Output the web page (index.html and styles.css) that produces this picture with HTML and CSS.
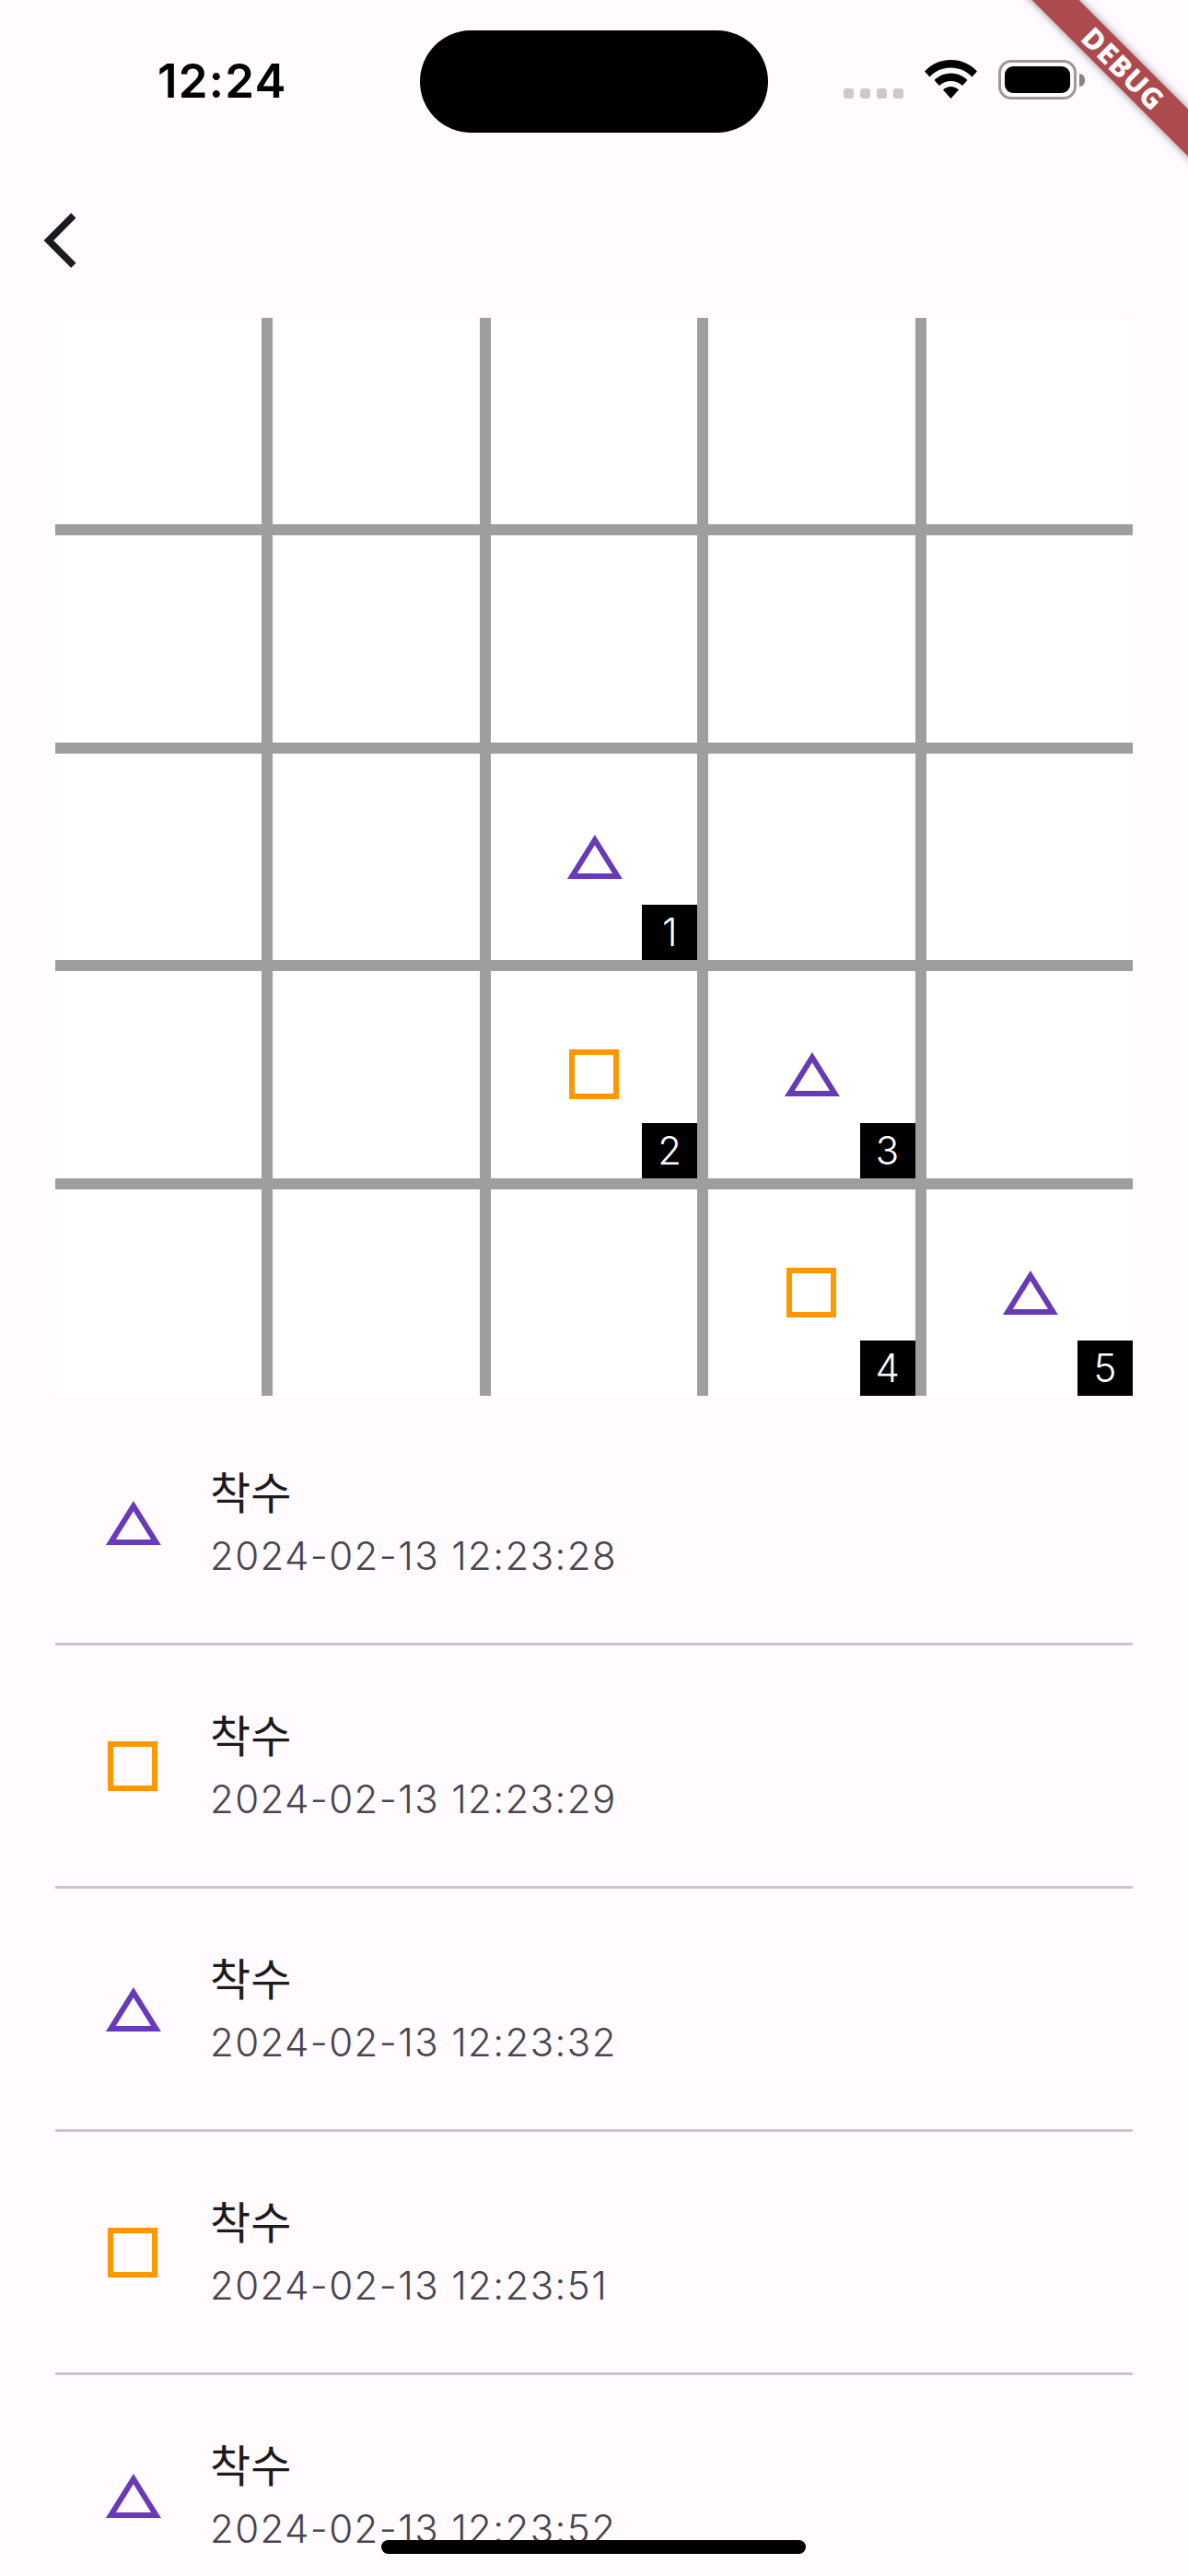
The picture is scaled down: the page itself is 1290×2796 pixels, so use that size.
FILE: index.html
```html
<!DOCTYPE html>
<html lang="ko">

<head>
    <meta name="viewport" content="width=device-width, initial-scale=1.0">
    <title>착수</title>
    <link rel="stylesheet" href="styles.css">
</head>

<body>
    <svg class="sprite" width="0" height="0">
        <symbol id="tri" viewBox="-0.3 0 24 24"><path d="M12 7.77 18.39 18H5.61L12 7.77M12 4 2 20h20L12 4z"/></symbol>
        <symbol id="sq" viewBox="0 0 24 24"><path d="M19 5v14H5V5h14m2-2H3v18h18V3z"/></symbol>
    </svg>

    <header class="status">
        <span class="time">12:24</span>
        <div class="island"></div>
        <div class="dots"><i></i><i></i><i></i><i></i></div>
        <svg class="wifi" viewBox="0 0 57 42">
            <path d="M28.5 0C39.5 0 49.5 4.300 57 12.500L51.500 18.500C45.500 12 37.500 8.500 28.500 8.500S11.500 12 5.500 18.500L0 12.500C7.500 4.300 17.500 0 28.500 0z"/>
            <path d="M28.500 14.500C35.500 14.500 41.500 17.200 46.500 22L41 28C37.500 24.800 33.300 23 28.500 23S19.500 24.800 16 28L10.500 22C15.500 17.200 21.500 14.500 28.500 14.500z"/>
            <path d="M28.500 29C31.800 29 34.700 30.200 37 32.500L28.500 42 20 32.500C22.300 30.200 25.200 29 28.500 29z"/>
        </svg>
        <div class="battery"><div class="level"></div></div>
        <div class="nub"></div>
    </header>

    <nav class="appbar">
        <svg class="back" viewBox="0 0 24 24"><path d="M17.510 3.870 15.730 2.100 5.840 12l9.900 9.900 1.770-1.770L9.380 12l8.130-8.130z"/></svg>
    </nav>

    <section class="board">
        <div class="cell"></div><div class="cell"></div><div class="cell"></div><div class="cell"></div><div class="cell"></div>
        <div class="cell"></div><div class="cell"></div><div class="cell"></div><div class="cell"></div><div class="cell"></div>
        <div class="cell"></div><div class="cell"></div>
        <div class="cell"><svg class="icon purple"><use href="#tri"/></svg><span class="badge">1</span></div>
        <div class="cell"></div><div class="cell"></div>
        <div class="cell"></div><div class="cell"></div>
        <div class="cell"><svg class="icon orange"><use href="#sq"/></svg><span class="badge">2</span></div>
        <div class="cell"><svg class="icon purple"><use href="#tri"/></svg><span class="badge">3</span></div>
        <div class="cell"></div>
        <div class="cell"></div><div class="cell"></div><div class="cell"></div>
        <div class="cell"><svg class="icon orange"><use href="#sq"/></svg><span class="badge">4</span></div>
        <div class="cell"><svg class="icon purple"><use href="#tri"/></svg><span class="badge">5</span></div>
    </section>

    <section class="moves">
        <div class="tile">
            <svg class="icon purple"><use href="#tri"/></svg>
            <div class="info"><p class="title">착수</p><p class="date">2024-02-13 12:23:28</p></div>
        </div>
        <div class="tile">
            <svg class="icon orange"><use href="#sq"/></svg>
            <div class="info"><p class="title">착수</p><p class="date">2024-02-13 12:23:29</p></div>
        </div>
        <div class="tile">
            <svg class="icon purple"><use href="#tri"/></svg>
            <div class="info"><p class="title">착수</p><p class="date">2024-02-13 12:23:32</p></div>
        </div>
        <div class="tile">
            <svg class="icon orange"><use href="#sq"/></svg>
            <div class="info"><p class="title">착수</p><p class="date">2024-02-13 12:23:51</p></div>
        </div>
        <div class="tile">
            <svg class="icon purple"><use href="#tri"/></svg>
            <div class="info"><p class="title">착수</p><p class="date">2024-02-13 12:23:52</p></div>
        </div>
    </section>

    <div class="ribbon">DEBUG</div>
    <div class="home"></div>
</body>

</html>
```

FILE: styles.css
```css
html, body {
    margin: 0;
    height: 2796px;
    overflow: hidden;
}

body {
    position: relative;
    background: #fffbff;
    font-family: Inter, "Noto Sans CJK KR", sans-serif;
    color: #1d1b20;
}

.sprite {
    position: absolute;
}

/* status bar */
.status {
    display: flex;
    align-items: flex-start;
    height: 147px;
}

.time {
    flex: none;
    width: 456px;
    margin-top: 58px;
    padding-left: 171px;
    box-sizing: border-box;
    font-size: 51px;
    line-height: 60px;
    font-weight: 600;
    letter-spacing: 1.2px;
    color: #000;
}

.island {
    flex: none;
    width: 378px;
    height: 111px;
    margin-top: 33px;
    background: #000;
    border-radius: 56px;
}

.dots {
    display: flex;
    gap: 7px;
    margin: 96px 0 0 82px;
}

.dots i {
    width: 11px;
    height: 11px;
    background: #cbc9cb;
    border-radius: 3px;
}

.wifi {
    width: 57px;
    height: 42px;
    margin: 65px 0 0 23px;
}

.battery {
    box-sizing: border-box;
    width: 85px;
    height: 43px;
    margin: 65px 0 0 23px;
    padding: 4px;
    border: 3px solid #9b999b;
    border-radius: 14px;
}

.level {
    height: 100%;
    background: #000;
    border-radius: 9px;
}

.nub {
    width: 6px;
    height: 14px;
    margin: 80px 0 0 3px;
    background: #858385;
    border-radius: 0 7px 7px 0;
}

/* app bar */
.appbar {
    height: 198px;
    padding: 78px 0 0 30px;
    box-sizing: border-box;
}

.back {
    display: block;
    width: 72px;
    height: 72px;
    fill: #1d1b20;
}

/* board */
.board {
    display: grid;
    grid-template-columns: repeat(5, 1fr);
    grid-template-rows: repeat(5, 1fr);
    gap: 12px;
    width: 1170px;
    height: 1170px;
    margin-left: 60px;
    background: #9e9e9e;
}

.cell {
    position: relative;
    display: flex;
    align-items: center;
    justify-content: center;
    background: #fff;
}

.icon {
    display: block;
    flex: none;
    width: 72px;
    height: 72px;
}

.purple {
    fill: #673ab7;
}

.orange {
    fill: #ff9800;
}

.badge {
    position: absolute;
    right: 0;
    bottom: 0;
    width: 60px;
    height: 60px;
    background: #000;
    color: #fff;
    font-size: 42px;
    font-weight: 300;
    line-height: 60px;
    text-align: center;
}

/* list */
.moves {
    width: 1170px;
    margin-left: 60px;
    padding-top: 7px;
}

.tile {
    display: flex;
    align-items: center;
    gap: 48px;
    height: 264px;
    padding-left: 48px;
    box-sizing: border-box;
    border-bottom: 3px solid #cac4d0;
}

.info p {
    margin: 0;
}

.info .title {
    margin-bottom: 4px;
    font-size: 48px;
    line-height: 68px;
}

.date {
    font-size: 42px;
    font-weight: 300;
    line-height: 60px;
    letter-spacing: 1.4px;
    color: #49454f;
}

/* overlays */
.ribbon {
    position: absolute;
    top: 54px;
    left: 1068px;
    box-sizing: border-box;
    width: 300px;
    height: 36px;
    padding-left: 6px;
    transform: rotate(45deg);
    background: #ad4a4d;
    box-shadow: 0 0 10px rgba(0, 0, 0, .45);
    color: #fff;
    font-family: "Noto Sans", sans-serif;
    font-size: 31px;
    font-weight: 800;
    line-height: 36px;
    letter-spacing: 1px;
    text-align: center;
}

.home {
    position: absolute;
    top: 2757px;
    left: 414px;
    width: 461px;
    height: 15px;
    background: #000;
    border-radius: 8px;
}
```
